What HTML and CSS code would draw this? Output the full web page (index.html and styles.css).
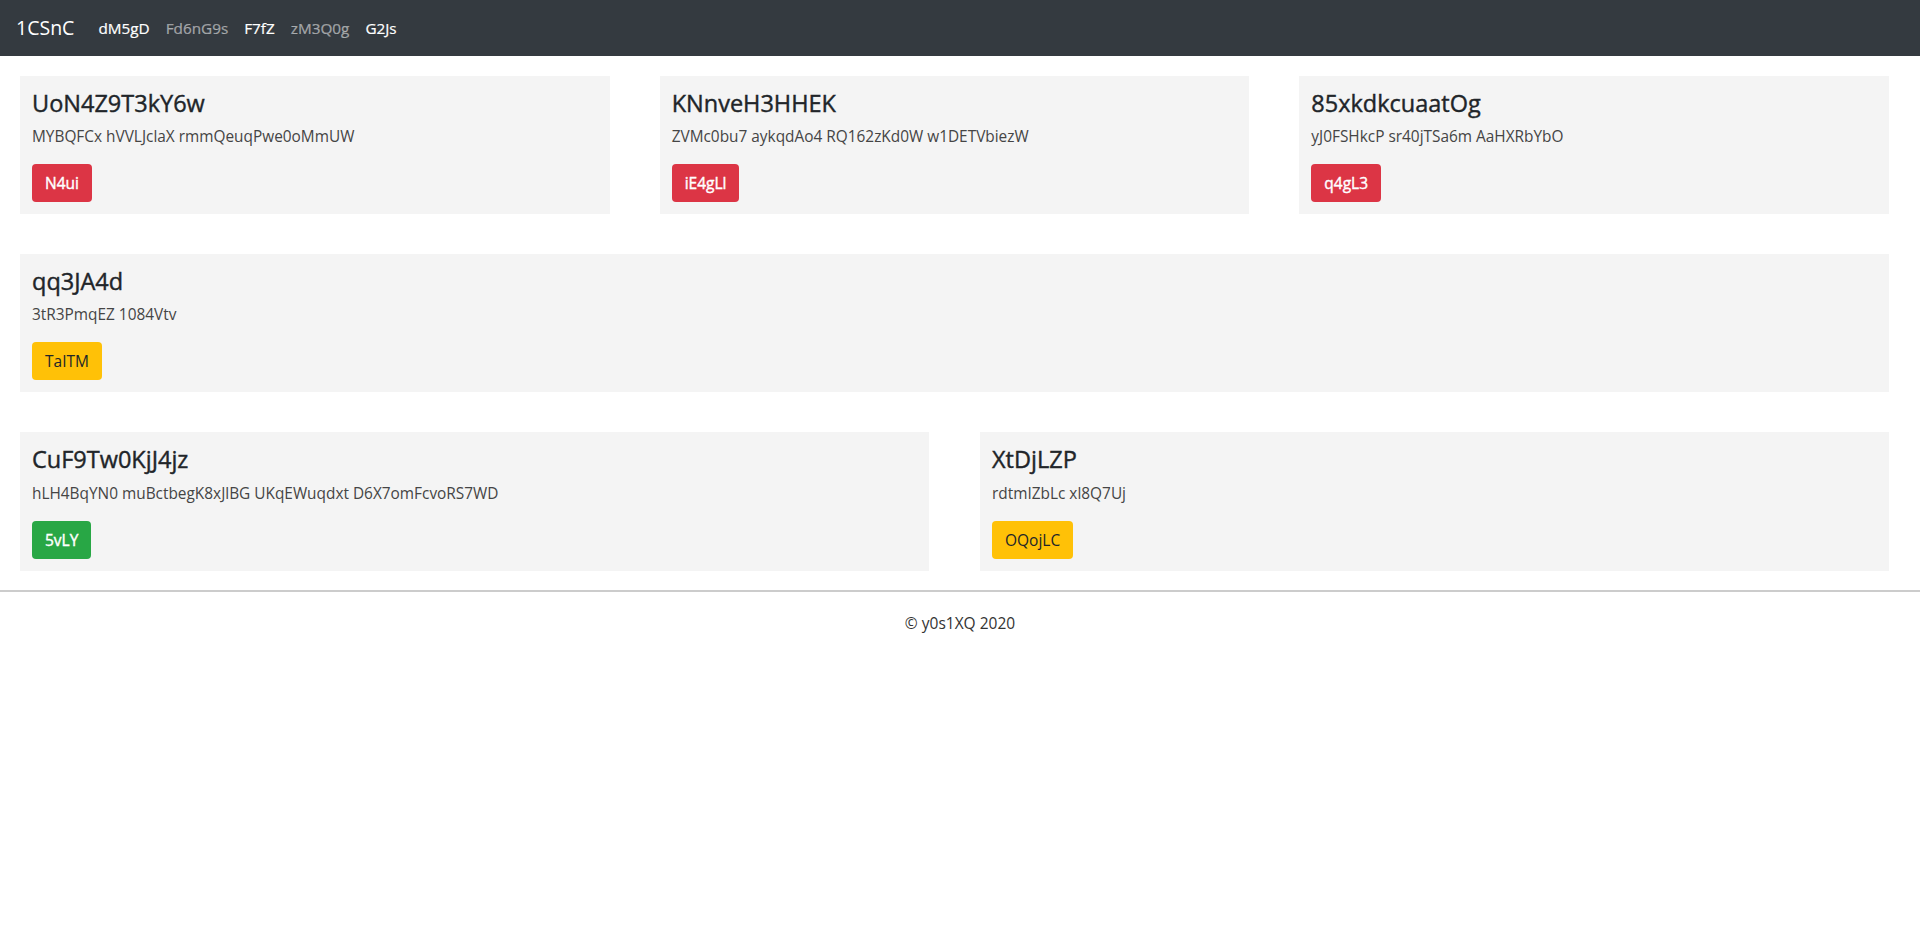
FILE: index.html
```html
<!DOCTYPE html>
<html lang="en">
<head>
<meta charset="utf-8">
<title>1CSnC</title>
<link rel="stylesheet" href="styles.css">
</head>
<body>
<nav class="navbar">
  <a class="brand" href="#">1CSnC</a>
  <ul class="nav">
    <li><a class="nav-link active" href="#">dM5gD</a></li>
    <li><a class="nav-link" href="#">Fd6nG9s</a></li>
    <li><a class="nav-link active" href="#">F7fZ</a></li>
    <li><a class="nav-link" href="#">zM3Q0g</a></li>
    <li><a class="nav-link active" href="#">G2Js</a></li>
  </ul>
</nav>
<main class="content">
  <section class="row row-3">
    <div class="card">
      <h4 class="card-title">UoN4Z9T3kY6w</h4>
      <p class="card-text">MYBQFCx hVVLJclaX rmmQeuqPwe0oMmUW</p>
      <a class="btn btn-danger" href="#">N4ui</a>
    </div>
    <div class="card">
      <h4 class="card-title">KNnveH3HHEK</h4>
      <p class="card-text">ZVMc0bu7 aykqdAo4 RQ162zKd0W w1DETVbiezW</p>
      <a class="btn btn-danger" href="#">iE4gLl</a>
    </div>
    <div class="card">
      <h4 class="card-title">85xkdkcuaatOg</h4>
      <p class="card-text">yJ0FSHkcP sr40jTSa6m AaHXRbYbO</p>
      <a class="btn btn-danger" href="#">q4gL3</a>
    </div>
  </section>
  <section class="row row-1">
    <div class="card">
      <h4 class="card-title">qq3JA4d</h4>
      <p class="card-text">3tR3PmqEZ 1084Vtv</p>
      <a class="btn btn-warning" href="#">TaITM</a>
    </div>
  </section>
  <section class="row row-2">
    <div class="card">
      <h4 class="card-title">CuF9Tw0KjJ4jz</h4>
      <p class="card-text">hLH4BqYN0 muBctbegK8xJlBG UKqEWuqdxt D6X7omFcvoRS7WD</p>
      <a class="btn btn-success" href="#">5vLY</a>
    </div>
    <div class="card">
      <h4 class="card-title">XtDjLZP</h4>
      <p class="card-text">rdtmIZbLc xl8Q7Uj</p>
      <a class="btn btn-warning" href="#">OQojLC</a>
    </div>
  </section>
</main>
<footer class="footer">
  <hr class="divider">
  <p class="copy">© y0s1XQ 2020</p>
</footer>
</body>
</html>
```

FILE: styles.css
```css
* { box-sizing: border-box; }

body {
  margin: 0;
  font-family: "Open Sans", "Noto Sans", "Liberation Sans", sans-serif;
  font-size: 16px;
  line-height: 1.5;
  color: #212529;
  background: #fff;
}

a { text-decoration: none; }

.navbar {
  display: flex;
  align-items: center;
  height: 56px;
  padding: 8px 16px;
  background: #343a40;
}

.brand {
  font-size: 19.5px;
  line-height: 30px;
  color: #fff;
  margin-right: 16px;
}

.nav {
  display: flex;
  list-style: none;
  margin: 0;
  padding: 0;
}

.nav-link {
  display: block;
  padding: 8px 8px;
  font-size: 15.3px;
  color: rgba(255, 255, 255, 0.5);
  -webkit-text-stroke: 0.2px currentColor;
}

.nav-link.active { color: #fff; }

.content {
  display: flex;
  flex-direction: column;
  gap: 40px;
  padding: 20px 31px 19px 20px;
}

.row { display: grid; }
.row-3 { grid-template-columns: repeat(3, 1fr); column-gap: 50px; }
.row-2 { grid-template-columns: repeat(2, 1fr); column-gap: 51px; }
.row-1 { grid-template-columns: 1fr; }

.card {
  background: #f4f4f4;
  padding: 13px 12px 12px;
}

.card-title {
  margin: 0 0 8px;
  font-size: 23.5px;
  font-weight: 400;
  line-height: 1.2;
  -webkit-text-stroke: 0.4px currentColor;
}

.card-text {
  margin: 0 0 15px;
  font-size: 15.4px;
  line-height: 24px;
  color: #454545;
}

.btn {
  display: inline-block;
  padding: 6px 12px;
  font-size: 15.5px;
  line-height: 24px;
  border-radius: 4px;
  border: 1px solid transparent;
  vertical-align: middle;
}

.btn-danger { background: #dc3545; color: #fff; -webkit-text-stroke: 0.4px currentColor; }
.btn-warning { background: #ffc107; color: #212529; }
.btn-success { background: #28a745; color: #fff; -webkit-text-stroke: 0.4px currentColor; }

.divider {
  margin: 0;
  border: 0;
  border-top: 2px solid #ccc;
}

.copy {
  margin: 0;
  padding: 20px 0;
  text-align: center;
  font-size: 15.5px;
  color: #333;
}
```
